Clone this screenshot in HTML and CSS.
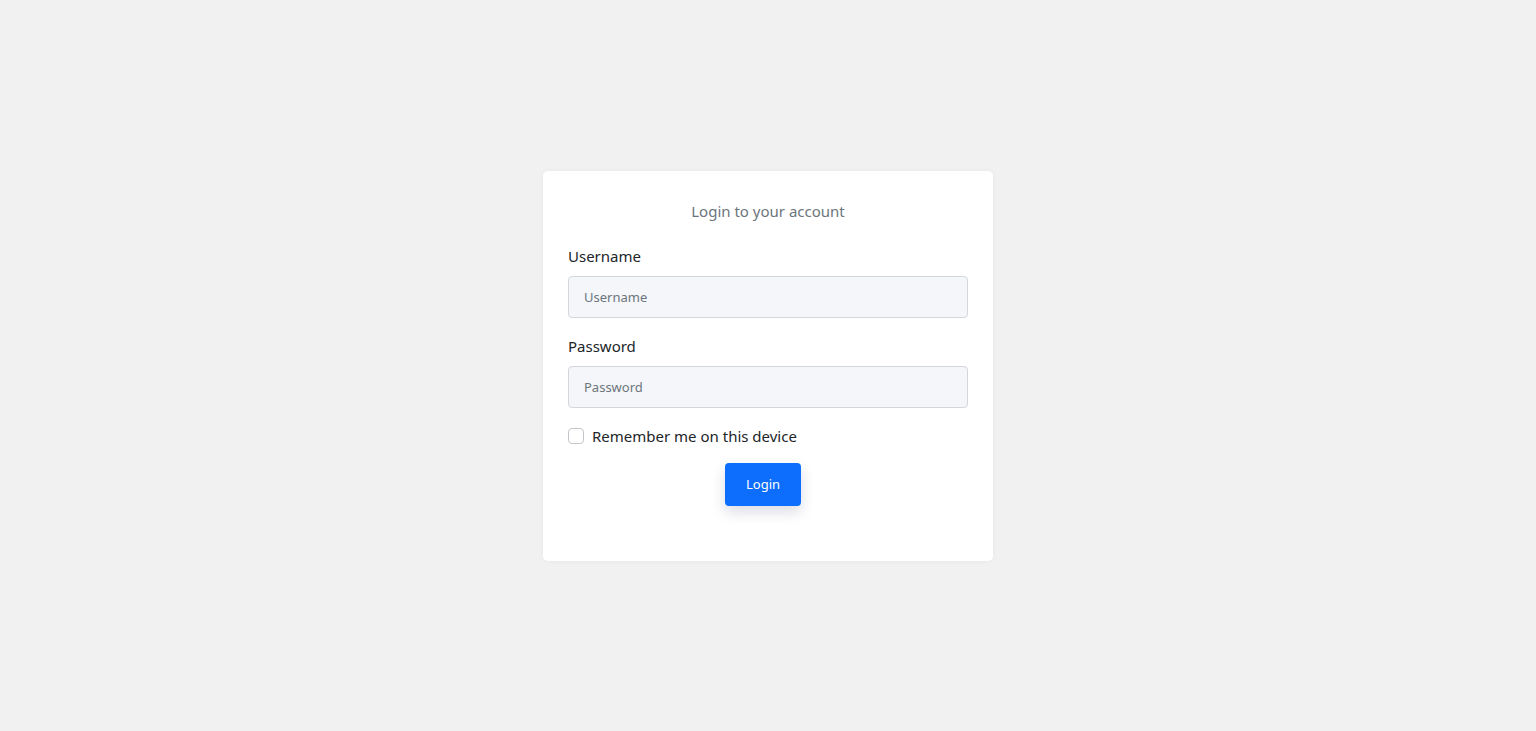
FILE: index.html
```html
<!DOCTYPE html>
<html lang="en">
<head>
<meta charset="utf-8">
<title>Login</title>
<link rel="stylesheet" href="styles.css">
</head>
<body>
<main class="page">
  <form class="card">
    <p class="title">Login to your account</p>
    <div class="field">
      <label class="label" for="u">Username</label>
      <input class="input" id="u" type="text" placeholder="Username">
    </div>
    <div class="field">
      <label class="label" for="p">Password</label>
      <input class="input" id="p" type="password" placeholder="Password">
    </div>
    <label class="check">
      <span class="box"></span>
      <span>Remember me on this device</span>
    </label>
    <div class="actions">
      <button class="btn" type="button">Login</button>
    </div>
  </form>
</main>
</body>
</html>
```
FILE: styles.css
```css
* { box-sizing: border-box; }
html, body { margin: 0; height: 100%; }
body {
  background: #f1f1f1;
  font-family: "Noto Sans", "Open Sans", sans-serif;
  color: #212529;
}
.page {
  height: 731px;
  display: flex;
  align-items: center;
  justify-content: center;
}
.card {
  width: 450px;
  height: 390px;
  background: #fff;
  border-radius: 5px;
  padding: 28px 25px 0;
  box-shadow: 0 0 6px rgba(0,0,0,0.04);
}
.title {
  margin: 0 0 22px;
  text-align: center;
  color: #6c757d;
  font-size: 15px;
  line-height: 24px;
}
.field { margin-bottom: 17px; }
.label {
  display: block;
  font-size: 15px;
  line-height: 22px;
  margin-bottom: 9px;
}
.input {
  display: block;
  width: 400px;
  height: 42px;
  padding: 0 15px;
  background: #f4f6f9;
  border: 1px solid #d3d7dc;
  border-radius: 4px;
  font-family: inherit;
  font-size: 13px;
  color: #212529;
  outline: none;
}
.input::placeholder { color: #6c757d; }
.check {
  display: flex;
  align-items: center;
  gap: 8px;
  font-size: 15px;
  line-height: 22px;
  margin-top: 2px;
}
.box {
  width: 16px;
  height: 16px;
  border: 1px solid #c3c7cc;
  border-radius: 4px;
  background: #fff;
}
.actions {
  display: flex;
  justify-content: center;
  margin-top: 16px;
  padding-right: 10px;
}
.btn {
  width: 76px;
  height: 43px;
  background: #0d6efd;
  color: #fff;
  border: none;
  border-radius: 4px;
  font-family: inherit;
  font-size: 13px;
  box-shadow: 0 6px 14px rgba(30,40,90,0.16);
}
```
